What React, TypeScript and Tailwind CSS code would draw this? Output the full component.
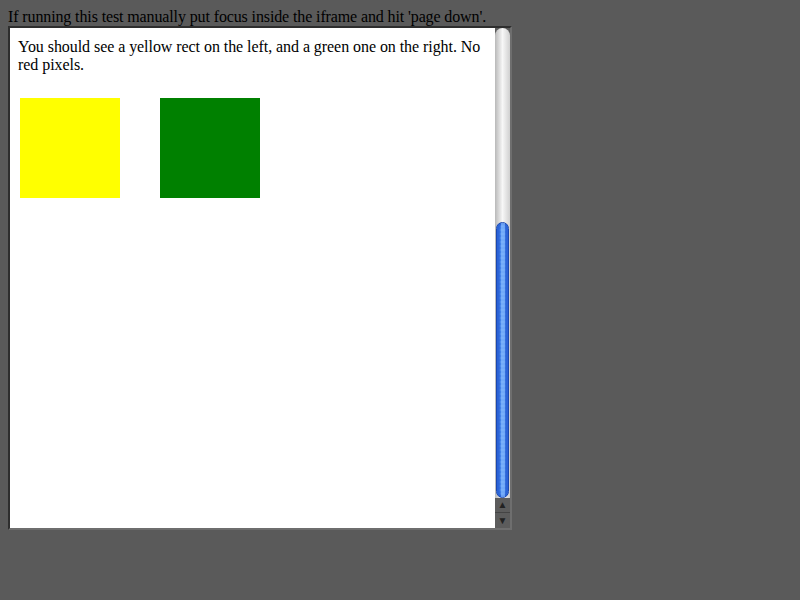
export default function App() {
  return (
    <div className="min-h-[600px] w-[800px] bg-[#5a5a5a] p-2 font-['Liberation_Serif',serif] text-base leading-[18px] tracking-[-0.12px] text-black">
      <div>If running this test manually put focus inside the iframe and hit 'page down'.</div>
      <div className="flex h-[504px] w-[504px] border-2 border-t-[#2e2e2e] border-l-[#2e2e2e] border-r-[#6e6e6e] border-b-[#6e6e6e] bg-white">
        <div className="flex-1 overflow-hidden px-2 pt-[10px]">
          <p className="tracking-[-0.06px]">You should see a yellow rect on the left, and a green one on the right. No red pixels.</p>
          <div className="mt-[24px] flex gap-10 pl-[2px]">
            <div className="h-[100px] w-[100px] bg-[#ffff00]" />
            <div className="h-[100px] w-[100px] bg-[#008000]" />
          </div>
        </div>
        <div className="flex w-[15px] flex-col bg-[#5c5c5c]">
          <div className="relative flex-1 rounded-t-full bg-gradient-to-r from-[#b9b9b9] via-[#f7f7f7] to-[#d0d0d0] pt-[194px]">
            <div className="mx-auto h-full w-[13px] rounded-full border border-[#1a48b0] bg-[repeating-linear-gradient(180deg,#4a8cf0_0px,#4a8cf0_2px,#5c9bf5_2px,#5c9bf5_4px)] shadow-[inset_3px_0_2px_#2a62d6,inset_-3px_0_2px_#2a62d6]">
              <div className="mx-auto h-full w-[4px] bg-[#8ec0ff]/60" />
            </div>
          </div>
          <div className="flex h-[15px] items-center justify-center border-b border-[#444] text-[10px] leading-none text-[#222]">▲</div>
          <div className="flex h-[15px] items-center justify-center text-[10px] leading-none text-[#222]">▼</div>
        </div>
      </div>
    </div>
  );
}
